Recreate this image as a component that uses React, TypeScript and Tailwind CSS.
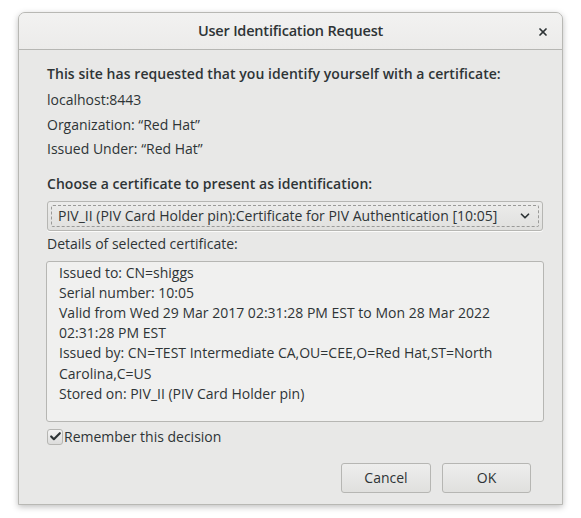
import { Check, ChevronDown, X } from "lucide-react";

const DETAILS = [
  "Issued to: CN=shiggs",
  "Serial number: 10:05",
  "Valid from Wed 29 Mar 2017 02:31:28 PM EST to Mon 28 Mar 2022",
  "02:31:28 PM EST",
  "Issued by: CN=TEST Intermediate CA,OU=CEE,O=Red Hat,ST=North",
  "Carolina,C=US",
  "Stored on: PIV_II (PIV Card Holder pin)",
];

const App = () => {
  return (
    <div className="w-[581px] h-[518px] bg-white pt-3 pl-[18px] font-['Open_Sans',sans-serif] text-[#2e3436]">
      <div className="w-[545px] h-[493px] flex flex-col rounded-t-[7px] border border-[#b8b8b4] bg-[#e8e8e7] shadow-[0_2px_6px_rgba(0,0,0,0.25)] overflow-hidden">
        <div className="relative h-[37px] shrink-0 flex items-center justify-center border-b border-[#b6b6b3] bg-gradient-to-b from-[#f2f2f1] to-[#ecebea]">
          <span className="text-[14.5px] font-semibold tracking-[-0.2px]">User Identification Request</span>
          <X className="absolute right-[13px] top-[13px] w-[12px] h-[12px]" strokeWidth={3.5} />
        </div>

        <div className="flex flex-col px-[28px] pt-[14px] text-[14px]">
          <div className="font-semibold leading-[20px] tracking-[0.05px]">This site has requested that you identify yourself with a certificate:</div>
          <div className="leading-[24.5px] mt-[4px]">localhost:8443</div>
          <div className="leading-[24.5px]">Organization: “Red Hat”</div>
          <div className="leading-[24.5px]">Issued Under: “Red Hat”</div>

          <div className="font-semibold leading-[20px] mt-[12px] tracking-[0.05px]">Choose a certificate to present as identification:</div>
          <div className="mt-[7px] h-[30px] w-[496px] rounded-[3px] border border-[#b6b6b3] bg-gradient-to-b from-[#ececeb] to-[#e0e0de] p-[3px] shadow-[0_1px_0_rgba(255,255,255,0.8)]">
            <div className="h-full flex items-center justify-between border border-dashed border-[#9a9a98] rounded-[2px] pl-[6px] pr-[6px]">
              <span>PIV_II (PIV Card Holder pin):Certificate for PIV Authentication [10:05]</span>
              <ChevronDown className="w-[14px] h-[14px]" strokeWidth={3} />
            </div>
          </div>
          <div className="leading-[20px] mt-[3px]">Details of selected certificate:</div>

          <div className="mt-[7px] h-[161px] w-[498px] -ml-[1px] rounded-[3px] border border-[#b6b6b3] bg-[#f0f0ef] pl-[12px] pt-[1px]">
            {DETAILS.map((line) => (
              <div key={line} className="leading-[20.2px]">{line}</div>
            ))}
          </div>

          <div className="mt-[6px] flex items-center h-[18px]">
            <div className="w-[16px] h-[16px] rounded-[3px] border border-[#b6b6b3] bg-gradient-to-b from-[#f4f4f4] to-[#dcdcdb] flex items-center justify-center">
              <Check className="w-[13px] h-[13px]" strokeWidth={4} />
            </div>
            <span className="ml-[1px]">Remember this decision</span>
          </div>

          <div className="mt-[17px] flex justify-end gap-[11px] mr-[3px]">
            <button className="w-[90px] h-[30px] rounded-[3px] border border-[#b6b6b3] bg-gradient-to-b from-[#eeeeed] to-[#e0e0de] text-[14px]">Cancel</button>
            <button className="w-[89px] h-[30px] rounded-[3px] border border-[#b6b6b3] bg-gradient-to-b from-[#eeeeed] to-[#e0e0de] text-[14px]">OK</button>
          </div>
        </div>
      </div>
    </div>
  );
};

export default App;
